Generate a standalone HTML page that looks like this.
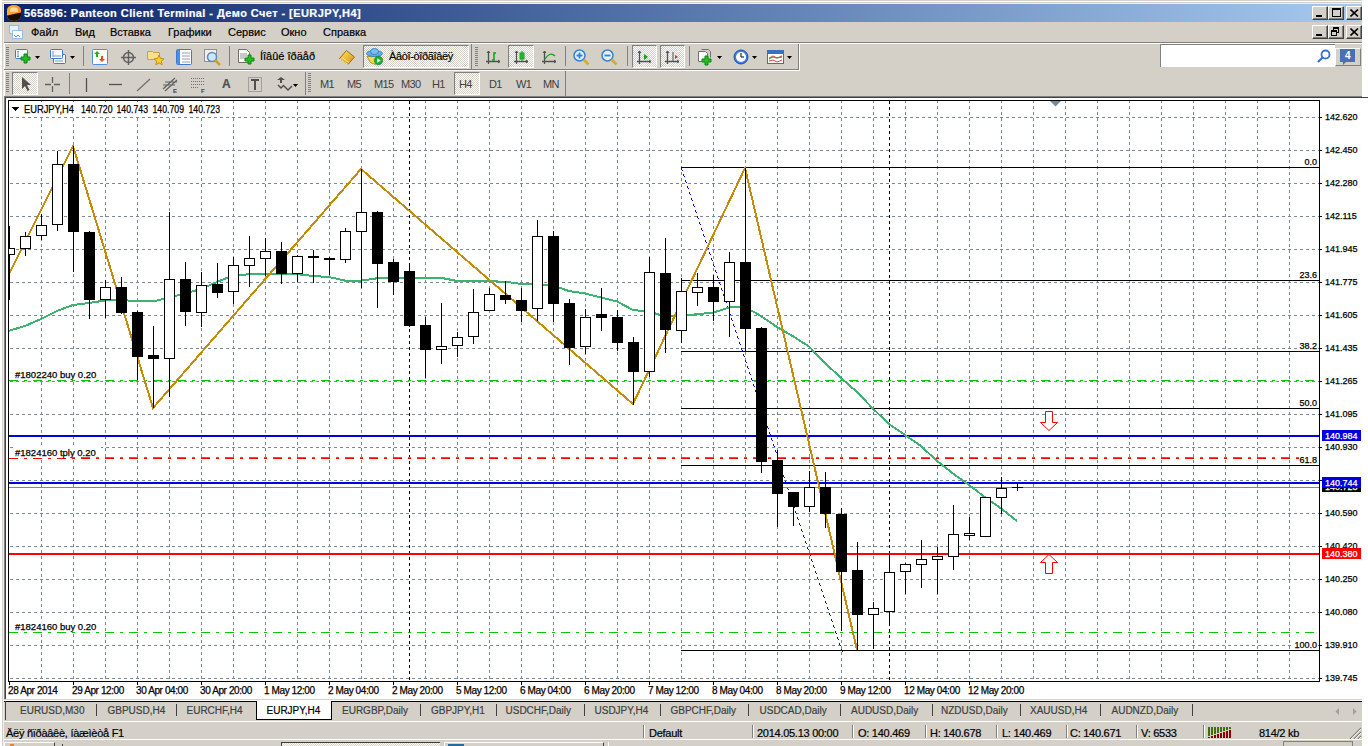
<!DOCTYPE html>
<html><head><meta charset="utf-8">
<style>
*{margin:0;padding:0;box-sizing:border-box}
html,body{width:1368px;height:746px;overflow:hidden;background:#fff;font-family:"Liberation Sans",sans-serif;}
.a{position:absolute}
.g{background:#d4d0c8}
.chart{position:absolute;left:0;top:0;}
.ct{font-family:"Liberation Sans",sans-serif;font-size:10px;fill:#000;stroke:#000;stroke-width:0.25px}
.fl{font-family:"Liberation Sans",sans-serif;font-size:9px;fill:#000;stroke:#000;stroke-width:0.25px}
.ol{font-family:"Liberation Sans",sans-serif;font-size:9.5px;fill:#000;stroke:#000;stroke-width:0.25px}
.tl{font-family:"Liberation Sans",sans-serif;font-size:10px;letter-spacing:-0.4px;fill:#000;stroke:#000;stroke-width:0.25px}
.ax{font-family:"Liberation Sans",sans-serif;font-size:9px;fill:#000;stroke:#000;stroke-width:0.25px}
.t{position:absolute;white-space:nowrap;font-size:11px;line-height:13px;color:#000;-webkit-text-stroke:0.2px}
.sep{position:absolute;width:1px;background:#808080}
.btn{position:absolute;background:#d4d0c8;border:1px solid;border-color:#fff #404040 #404040 #fff;box-shadow:inset -1px -1px 0 #808080}
.grip{position:absolute;width:3px;background:repeating-linear-gradient(#808080 0 1px,transparent 1px 2px)}
.press{position:absolute;border:1px solid;border-color:#808080 #fff #fff #808080;background-color:#e8e6e0;background-image:repeating-conic-gradient(#fff 0 25%,#d4d0c8 0 50%);background-size:2px 2px}
.tab{position:absolute;top:705px;font-size:10px;color:#404040;white-space:nowrap;-webkit-text-stroke:0.2px}
.tsep{position:absolute;top:704px;width:1px;height:12px;background:#404040}
.ssep{position:absolute;top:725px;width:2px;height:13px;border-left:1px solid #808080;border-right:1px solid #fff}
.st{position:absolute;top:727px;font-size:11px;color:#000;white-space:nowrap;letter-spacing:-0.27px;-webkit-text-stroke:0.2px}
</style></head><body>
<!-- window -->
<div class="a g" style="left:2px;top:0;width:1360px;height:1px"></div>
<div class="a g" style="left:2px;top:2px;width:1360px;height:744px"></div>
<div class="a" style="left:3px;top:3px;width:1359px;height:1px;background:#f0efea"></div>
<div class="a" style="left:3px;top:3px;width:1px;height:743px;background:#f0efea"></div>
<!-- title -->
<div class="a" style="left:4px;top:4px;width:1358px;height:18px;background:linear-gradient(90deg,#0a246a,#a6caf0)"></div>
<div class="a" style="left:7px;top:5px;width:14px;height:16px;border-radius:7px/5px;background:linear-gradient(100deg,#ffb030,#ff8a20);overflow:hidden">
  <div class="a" style="left:3px;top:2px;width:8px;height:5px;border-radius:4px 4px 0 0;background:#ffe6c0;opacity:.8"></div>
  <div class="a" style="left:-2px;top:9px;width:18px;height:9px;background:#1a0e04;transform:rotate(-12deg)"></div>
</div>
<div class="t" style="left:24px;top:7px;color:#fff;font-weight:bold;font-size:11px;letter-spacing:0.43px">565896: Panteon Client Terminal - Демо Счет - [EURJPY,H4]</div>
<div class="btn" style="left:1312px;top:6px;width:16px;height:14px"><div class="a" style="left:3px;top:8px;width:6px;height:2px;background:#000"></div></div>
<div class="btn" style="left:1328px;top:6px;width:16px;height:14px"><div class="a" style="left:3px;top:1px;width:9px;height:9px;border:1px solid #000;border-top-width:2px"></div></div>
<div class="btn" style="left:1346px;top:6px;width:16px;height:14px"><svg class="a" style="left:3px;top:2px" width="9" height="8"><path d="M0.5 0.5L8 7.5M8 0.5L0.5 7.5" stroke="#000" stroke-width="1.6"/></svg></div>
<!-- menu -->
<svg class="a" style="left:9px;top:25px" width="15" height="15"><rect x="0.5" y="0.5" width="9" height="8" fill="#eaf2ff" stroke="#4a8ee8" stroke-dasharray="1 1"/><rect x="3.5" y="5.5" width="10" height="8" fill="#fff" stroke="#4a8ee8" stroke-dasharray="1 1"/><path d="M5 10l2 2l2-2l2 2" stroke="#4a8ee8" fill="none"/></svg>
<div class="t" style="left:31px;top:26px">Файл</div>
<div class="t" style="left:75px;top:26px">Вид</div>
<div class="t" style="left:110px;top:26px">Вставка</div>
<div class="t" style="left:168px;top:26px">Графики</div>
<div class="t" style="left:228px;top:26px">Сервис</div>
<div class="t" style="left:281px;top:26px">Окно</div>
<div class="t" style="left:323px;top:26px">Справка</div>
<div class="btn" style="left:1312px;top:25px;width:16px;height:14px"><div class="a" style="left:3px;top:8px;width:6px;height:2px;background:#000"></div></div>
<div class="btn" style="left:1328px;top:25px;width:16px;height:14px"><svg class="a" style="left:2px;top:1px" width="10" height="10" shape-rendering="crispEdges"><path d="M2 0h6v2h-6zM2 2h1v1h-1zM7 2h1v4h-1zM6 5h2v1h-2z" fill="#000"/><path d="M0 3h6v2h-6zM0 5h1v4h-1zM5 5h1v4h-1zM0 8h6v1h-6z" fill="#000"/></svg></div>
<div class="btn" style="left:1346px;top:25px;width:16px;height:14px"><svg class="a" style="left:3px;top:2px" width="9" height="8"><path d="M0.5 0.5L8 7.5M8 0.5L0.5 7.5" stroke="#000" stroke-width="1.6"/></svg></div>
<div class="a" style="left:4px;top:42px;width:1358px;height:1px;background:#808080"></div>
<div class="a" style="left:4px;top:43px;width:1358px;height:1px;background:#fff"></div>
<!-- toolbars -->
<div class="a" style="left:4px;top:44px;width:795px;height:25px;border-left:1px solid #fff;border-right:1px solid #808080"></div><div class="grip" style="left:6px;top:47px;height:19px"></div><svg class="a" style="left:15px;top:49px" width="18" height="16"><rect x="0.5" y="0.5" width="12" height="9" rx="1" fill="#f4f8ff" stroke="#3a7ad0"/><path d="M3 2v6M2 3l1-1 1 1M2 7l1 1 1-1" stroke="#7a9ac0" fill="none"/><path d="M9 5h3v3h3v3h-3v3h-3v-3h-3v-3h3z" fill="#20c020" stroke="#108010"/></svg><svg class="a" style="left:35px;top:56px" width="6" height="4"><path d="M0 0h5l-2.5 3z" fill="#000"/></svg><svg class="a" style="left:50px;top:49px" width="18" height="16"><rect x="3.5" y="5.5" width="12" height="9" rx="1" fill="#f4f8ff" stroke="#3a7ad0"/><rect x="0.5" y="0.5" width="12" height="9" rx="1" fill="#f4f8ff" stroke="#3a7ad0"/><path d="M3 2v6M3 7h8M5 12h8" stroke="#7a9ac0" fill="none"/></svg><svg class="a" style="left:70px;top:56px" width="6" height="4"><path d="M0 0h5l-2.5 3z" fill="#000"/></svg><div class="sep" style="left:83px;top:46px;height:20px"></div><svg class="a" style="left:92px;top:49px" width="16" height="16"><rect x="0.5" y="0.5" width="15" height="15" rx="1" fill="#fff" stroke="#4a90e0"/><path d="M5 2l3 3h-2v3h-2v-3h-2z" fill="#20b020"/><path d="M10 13l3-3h-2v-3h-2v3h-2z" fill="#e05020"/></svg><svg class="a" style="left:121px;top:50px" width="16" height="16"><circle cx="7.5" cy="7.5" r="5" fill="none" stroke="#606060" stroke-width="1.5"/><path d="M7.5 0v15M0 7.5h15" stroke="#606060" stroke-width="1.5"/></svg><svg class="a" style="left:147px;top:49px" width="18" height="17"><path d="M0.5 2.5h5l1 1h6v7h-12z" fill="#f8e08a" stroke="#c8a040"/><path d="M12 6l1.5 3.5 3.5.3-2.7 2.4.9 3.6-3.2-2-3.2 2 .9-3.6-2.7-2.4 3.5-.3z" fill="#ffd020" stroke="#c09010"/></svg><svg class="a" style="left:176px;top:49px" width="16" height="16"><rect x="0.5" y="0.5" width="15" height="15" rx="1" fill="#fff" stroke="#3a7ad0"/><rect x="1" y="1" width="3" height="14" fill="#4a90e0"/><path d="M6 4h8M6 7h8M6 10h8M6 13h8" stroke="#8aa0c0"/></svg><svg class="a" style="left:204px;top:49px" width="19" height="17"><rect x="0.5" y="0.5" width="12" height="12" fill="#f0f0f0" stroke="#909090"/><circle cx="8" cy="8" r="4.5" fill="#cfe6ff" stroke="#5a8ac0" stroke-width="1.5"/><path d="M11 11l5 5" stroke="#d0a020" stroke-width="2.5"/></svg><div class="sep" style="left:229px;top:46px;height:20px"></div><svg class="a" style="left:238px;top:49px" width="18" height="17"><path d="M0.5 0.5h8l3 3v10h-11z" fill="#fff" stroke="#707070"/><path d="M2 5h7M2 7h7M2 9h5" stroke="#909090"/><path d="M10 6h3v3h3v3h-3v3h-3v-3h-3v-3h3z" fill="#20c020" stroke="#108010"/></svg><div class="t" style="left:260px;top:50px;color:#000;font-size:11px;">Íîâûé îðäåð</div><svg class="a" style="left:338px;top:49px" width="19" height="17"><defs><linearGradient id="bk" x1="0" y1="0" x2="1" y2="1"><stop offset="0" stop-color="#ffe860"/><stop offset="1" stop-color="#d09010"/></linearGradient></defs><path d="M1.5 9.5L8.5 1.5L16.5 8L10 15.5z" fill="url(#bk)" stroke="#a06a10"/><path d="M2 10l8 5.5M4 8.5l7 5" stroke="#f8e0a0" stroke-width="1"/></svg><div class="press" style="left:363px;top:45px;width:106px;height:23px"></div><svg class="a" style="left:366px;top:48px" width="18" height="17"><path d="M1 8.5l3.5 6 5 2 4-8z" fill="#f8d850" stroke="#c09020"/><ellipse cx="8.5" cy="5.5" rx="8" ry="3" fill="#60b0e8" stroke="#3a88c0"/><ellipse cx="8.5" cy="3.5" rx="4" ry="3" fill="#78c0f0" stroke="#3a88c0"/><circle cx="12.5" cy="12.5" r="4.2" fill="#18b030" stroke="#108020" stroke-width="0.6"/><path d="M11.2 10.2v4.6l3.6-2.3z" fill="#fff"/></svg><div class="t" style="left:389px;top:50px;color:#000;font-size:11px;letter-spacing:-0.35px">Àâòî-òîðãîâëÿ</div><div class="sep" style="left:471px;top:44px;height:25px"></div><div class="grip" style="left:475px;top:47px;height:19px"></div><svg class="a" style="left:486px;top:50px" width="15" height="16"><path d="M2.5 1v13M0 11.5h14" stroke="#505050" stroke-width="1.3"/><path d="M1 3l1.5-2 1.5 2M12 10l2 1.5-2 1.5" stroke="#505050" fill="none"/><path d="M6 10h2V3h2" stroke="#10a010" stroke-width="1.5" fill="none"/></svg><div class="press" style="left:508px;top:45px;width:26px;height:23px"></div><svg class="a" style="left:514px;top:50px" width="15" height="16"><path d="M2.5 1v13M0 11.5h14" stroke="#505050" stroke-width="1.3"/><path d="M1 3l1.5-2 1.5 2M12 10l2 1.5-2 1.5" stroke="#505050" fill="none"/><rect x="6" y="3" width="4" height="6" fill="#20d040" stroke="#10a010"/><path d="M8 1v10" stroke="#10a010"/></svg><svg class="a" style="left:542px;top:50px" width="15" height="16"><path d="M2.5 1v13M0 11.5h14" stroke="#505050" stroke-width="1.3"/><path d="M1 3l1.5-2 1.5 2M12 10l2 1.5-2 1.5" stroke="#505050" fill="none"/><path d="M3 9q5-8 10-3" stroke="#10a010" stroke-width="1.3" fill="none"/></svg><div class="sep" style="left:565px;top:46px;height:20px"></div><svg class="a" style="left:573px;top:49px" width="18" height="17"><circle cx="6.5" cy="6.5" r="5.5" fill="#e0f0ff" stroke="#3a80d0" stroke-width="1.5"/><path d="M6.5 3.5v6M3.5 6.5h6" stroke="#3a80d0" stroke-width="1.8"/><path d="M10.5 10.5l5 5" stroke="#d0b030" stroke-width="2.8"/></svg><svg class="a" style="left:601px;top:49px" width="18" height="17"><circle cx="6.5" cy="6.5" r="5.5" fill="#e0f0ff" stroke="#3a80d0" stroke-width="1.5"/><path d="M3.5 6.5h6" stroke="#3a80d0" stroke-width="1.8"/><path d="M10.5 10.5l5 5" stroke="#d0b030" stroke-width="2.8"/></svg><div class="sep" style="left:627px;top:46px;height:20px"></div><div class="press" style="left:632px;top:45px;width:25px;height:23px"></div><svg class="a" style="left:637px;top:50px" width="15" height="16"><path d="M2.5 1v13M0 11.5h14" stroke="#505050" stroke-width="1.3"/><path d="M1 3l1.5-2 1.5 2M12 10l2 1.5-2 1.5" stroke="#505050" fill="none"/><path d="M7 4l4 3-4 3z" fill="#10a010"/></svg><div class="press" style="left:660px;top:45px;width:25px;height:23px"></div><svg class="a" style="left:665px;top:50px" width="15" height="16"><path d="M2.5 1v13M0 11.5h14" stroke="#505050" stroke-width="1.3"/><path d="M1 3l1.5-2 1.5 2M12 10l2 1.5-2 1.5" stroke="#505050" fill="none"/><path d="M8 2v10" stroke="#505050"/><path d="M13 7l-3-2v4z" fill="#d03010"/></svg><div class="sep" style="left:689px;top:46px;height:20px"></div><svg class="a" style="left:698px;top:49px" width="18" height="17"><path d="M0.5 2.5h7l2 2v8h-9z" fill="#fff" stroke="#707070"/><path d="M3.5 0.5h7l2 2v6" fill="none" stroke="#707070"/><path d="M7 7h3v3h3v3h-3v3h-3v-3h-3v-3h3z" fill="#20c020" stroke="#108010"/></svg><svg class="a" style="left:717px;top:56px" width="6" height="4"><path d="M0 0h5l-2.5 3z" fill="#000"/></svg><svg class="a" style="left:733px;top:49px" width="17" height="17"><circle cx="8" cy="8" r="7" fill="#3a80e0" stroke="#1a50a0"/><circle cx="8" cy="8" r="5" fill="#fff"/><path d="M8 4v4h3" stroke="#000" fill="none"/></svg><svg class="a" style="left:752px;top:56px" width="6" height="4"><path d="M0 0h5l-2.5 3z" fill="#000"/></svg><svg class="a" style="left:767px;top:50px" width="18" height="15"><rect x="0.5" y="0.5" width="16" height="13" fill="#fff" stroke="#3a70c0"/><rect x="1" y="1" width="15" height="3" fill="#3a70c0"/><path d="M2 8l4-2 4 2 5-2M2 11l4-1 4 2 5-2" stroke="#e04040" fill="none"/><path d="M2 9l4-2 4 1 5-1" stroke="#20a020" fill="none"/></svg><svg class="a" style="left:787px;top:56px" width="6" height="4"><path d="M0 0h5l-2.5 3z" fill="#000"/></svg><div class="a" style="left:1160px;top:44px;width:175px;height:23px;background:#fff;border-top:1px solid #808080;border-left:1px solid #808080"></div><svg class="a" style="left:1317px;top:49px" width="14" height="14"><circle cx="8.5" cy="5.5" r="4" fill="none" stroke="#3a70d0" stroke-width="1.8"/><path d="M6 8l-5 5" stroke="#3a70d0" stroke-width="2.2"/></svg><div class="a" style="left:1335px;top:48px;width:26px;height:18px;border-top:1px solid #fff;border-left:1px solid #fff;border-right:1px solid #808080;border-bottom:1px solid #808080"></div><svg class="a" style="left:1340px;top:48px" width="16" height="17"><rect x="0" y="1" width="15" height="13" fill="#4a70b0"/><path d="M3 14v3l3-3z" fill="#4a70b0"/><text x="5" y="11" font-size="10" font-weight="bold" fill="#fff" font-family="Liberation Sans">4</text></svg><div class="a" style="left:4px;top:71px;width:562px;height:25px;border-left:1px solid #fff;border-right:1px solid #808080"></div><div class="grip" style="left:6px;top:73px;height:20px"></div><div class="press" style="left:12px;top:72px;width:26px;height:23px"></div><svg class="a" style="left:19px;top:76px" width="14" height="16"><path d="M3 1v12l3-3 2.5 5 2-1-2.5-5h4z" fill="#505050"/></svg><svg class="a" style="left:45px;top:77px" width="16" height="16"><path d="M7.5 0v6M7.5 9v6M0 7.5h6M9 7.5h6" stroke="#606060" stroke-width="1.3"/></svg><div class="sep" style="left:69px;top:73px;height:21px"></div><svg class="a" style="left:85px;top:78px" width="3" height="14"><path d="M1.5 0v14" stroke="#505050" stroke-width="1.3"/></svg><svg class="a" style="left:109px;top:83px" width="13" height="3"><path d="M0 1.5h13" stroke="#505050" stroke-width="1.3"/></svg><svg class="a" style="left:136px;top:78px" width="15" height="14"><path d="M1 13L14 1" stroke="#707070" stroke-width="1.3"/></svg><svg class="a" style="left:162px;top:76px" width="17" height="18"><path d="M1 13L13 2M3 15L15 4M1 9h12M3 6h12" stroke="#606060" stroke-width="1.2"/><text x="11" y="17" font-size="6" font-weight="bold" fill="#404040" font-family="Liberation Sans">E</text></svg><svg class="a" style="left:191px;top:77px" width="17" height="17"><path d="M0 1.5h13M0 4.5h13M0 7.5h13M0 10.5h8" stroke="#707070" stroke-dasharray="1 1"/><text x="10" y="16" font-size="6" font-weight="bold" fill="#404040" font-family="Liberation Sans">F</text></svg><div class="t" style="left:222px;top:78px;color:#505050;font-size:12px;"><b>A</b></div><svg class="a" style="left:248px;top:77px" width="14" height="15"><rect x="0.5" y="0.5" width="13" height="14" fill="none" stroke="#707070" stroke-dasharray="1 1"/><path d="M3 3h8M7 3v10" stroke="#505050" stroke-width="2"/></svg><svg class="a" style="left:276px;top:77px" width="23" height="15"><path d="M1 3l4-3 4 3-3 0v3h-2v-3z" fill="#505050"/><path d="M2 8l3 3 3-3M8 9l4 4 4-4" stroke="#505050" stroke-width="1.5" fill="none"/><path d="M17 7h5l-2.5 3z" fill="#000"/></svg><div class="sep" style="left:305px;top:72px;height:23px"></div><div class="grip" style="left:308px;top:73px;height:20px"></div><div class="t" style="left:320px;top:78px;color:#404040;font-size:11px;letter-spacing:-0.6px;-webkit-text-stroke:0">M1</div><div class="t" style="left:347px;top:78px;color:#404040;font-size:11px;letter-spacing:-0.6px;-webkit-text-stroke:0">M5</div><div class="t" style="left:374px;top:78px;color:#404040;font-size:11px;letter-spacing:-0.6px;-webkit-text-stroke:0">M15</div><div class="t" style="left:401px;top:78px;color:#404040;font-size:11px;letter-spacing:-0.6px;-webkit-text-stroke:0">M30</div><div class="t" style="left:432px;top:78px;color:#404040;font-size:11px;letter-spacing:-0.6px;-webkit-text-stroke:0">H1</div><div class="press" style="left:454px;top:72px;width:26px;height:23px"></div><div class="t" style="left:459px;top:78px;color:#404040;font-size:11px;letter-spacing:-0.6px;-webkit-text-stroke:0">H4</div><div class="t" style="left:489px;top:78px;color:#404040;font-size:11px;letter-spacing:-0.6px;-webkit-text-stroke:0">D1</div><div class="t" style="left:516px;top:78px;color:#404040;font-size:11px;letter-spacing:-0.6px;-webkit-text-stroke:0">W1</div><div class="t" style="left:543px;top:78px;color:#404040;font-size:11px;letter-spacing:-0.6px;-webkit-text-stroke:0">MN</div>
<div class="a" style="left:4px;top:69px;width:795px;height:1px;background:#808080"></div>
<div class="a" style="left:4px;top:70px;width:796px;height:1px;background:#fff"></div>
<div class="a" style="left:799px;top:44px;width:1px;height:26px;background:#fff"></div>
<div class="a" style="left:4px;top:96px;width:1358px;height:1px;background:#808080"></div>
<div class="a" style="left:4px;top:97px;width:1364px;height:1px;background:#404040"></div>
<div class="a" style="left:4px;top:96px;width:1px;height:603px;background:#808080"></div>
<div class="a" style="left:5px;top:97px;width:1px;height:602px;background:#404040"></div>
<svg class="chart" width="1368" height="746" viewBox="0 0 1368 746" shape-rendering="crispEdges"><defs><clipPath id="cc"><rect x="9" y="101" width="1310" height="580"/></clipPath></defs><rect x="6" y="98" width="1362" height="601" fill="#fff"/><g clip-path="url(#cc)"><line x1="10" y1="117.5" x2="1319" y2="117.5" stroke="#778899" stroke-dasharray="3 3"/><line x1="10" y1="150.5" x2="1319" y2="150.5" stroke="#778899" stroke-dasharray="3 3"/><line x1="10" y1="183.5" x2="1319" y2="183.5" stroke="#778899" stroke-dasharray="3 3"/><line x1="10" y1="216.5" x2="1319" y2="216.5" stroke="#778899" stroke-dasharray="3 3"/><line x1="10" y1="249.5" x2="1319" y2="249.5" stroke="#778899" stroke-dasharray="3 3"/><line x1="10" y1="282.5" x2="1319" y2="282.5" stroke="#778899" stroke-dasharray="3 3"/><line x1="10" y1="315.5" x2="1319" y2="315.5" stroke="#778899" stroke-dasharray="3 3"/><line x1="10" y1="348.5" x2="1319" y2="348.5" stroke="#778899" stroke-dasharray="3 3"/><line x1="10" y1="381.5" x2="1319" y2="381.5" stroke="#778899" stroke-dasharray="3 3"/><line x1="10" y1="414.5" x2="1319" y2="414.5" stroke="#778899" stroke-dasharray="3 3"/><line x1="10" y1="447.5" x2="1319" y2="447.5" stroke="#778899" stroke-dasharray="3 3"/><line x1="10" y1="480.5" x2="1319" y2="480.5" stroke="#778899" stroke-dasharray="3 3"/><line x1="10" y1="513.5" x2="1319" y2="513.5" stroke="#778899" stroke-dasharray="3 3"/><line x1="10" y1="546.5" x2="1319" y2="546.5" stroke="#778899" stroke-dasharray="3 3"/><line x1="10" y1="579.5" x2="1319" y2="579.5" stroke="#778899" stroke-dasharray="3 3"/><line x1="10" y1="612.5" x2="1319" y2="612.5" stroke="#778899" stroke-dasharray="3 3"/><line x1="10" y1="645.5" x2="1319" y2="645.5" stroke="#778899" stroke-dasharray="3 3"/><line x1="10" y1="678.5" x2="1319" y2="678.5" stroke="#778899" stroke-dasharray="3 3"/><line x1="41.5" y1="100" x2="41.5" y2="681" stroke="#778899" stroke-dasharray="3 3"/><line x1="73.5" y1="100" x2="73.5" y2="681" stroke="#778899" stroke-dasharray="3 3"/><line x1="105.5" y1="100" x2="105.5" y2="681" stroke="#778899" stroke-dasharray="3 3"/><line x1="137.5" y1="100" x2="137.5" y2="681" stroke="#778899" stroke-dasharray="3 3"/><line x1="169.5" y1="100" x2="169.5" y2="681" stroke="#778899" stroke-dasharray="3 3"/><line x1="201.5" y1="100" x2="201.5" y2="681" stroke="#778899" stroke-dasharray="3 3"/><line x1="233.5" y1="100" x2="233.5" y2="681" stroke="#778899" stroke-dasharray="3 3"/><line x1="265.5" y1="100" x2="265.5" y2="681" stroke="#778899" stroke-dasharray="3 3"/><line x1="297.5" y1="100" x2="297.5" y2="681" stroke="#778899" stroke-dasharray="3 3"/><line x1="329.5" y1="100" x2="329.5" y2="681" stroke="#778899" stroke-dasharray="3 3"/><line x1="361.5" y1="100" x2="361.5" y2="681" stroke="#778899" stroke-dasharray="3 3"/><line x1="393.5" y1="100" x2="393.5" y2="681" stroke="#778899" stroke-dasharray="3 3"/><line x1="425.5" y1="100" x2="425.5" y2="681" stroke="#778899" stroke-dasharray="3 3"/><line x1="457.5" y1="100" x2="457.5" y2="681" stroke="#778899" stroke-dasharray="3 3"/><line x1="489.5" y1="100" x2="489.5" y2="681" stroke="#778899" stroke-dasharray="3 3"/><line x1="521.5" y1="100" x2="521.5" y2="681" stroke="#778899" stroke-dasharray="3 3"/><line x1="553.5" y1="100" x2="553.5" y2="681" stroke="#778899" stroke-dasharray="3 3"/><line x1="585.5" y1="100" x2="585.5" y2="681" stroke="#778899" stroke-dasharray="3 3"/><line x1="617.5" y1="100" x2="617.5" y2="681" stroke="#778899" stroke-dasharray="3 3"/><line x1="649.5" y1="100" x2="649.5" y2="681" stroke="#778899" stroke-dasharray="3 3"/><line x1="681.5" y1="100" x2="681.5" y2="681" stroke="#778899" stroke-dasharray="3 3"/><line x1="713.5" y1="100" x2="713.5" y2="681" stroke="#778899" stroke-dasharray="3 3"/><line x1="745.5" y1="100" x2="745.5" y2="681" stroke="#778899" stroke-dasharray="3 3"/><line x1="777.5" y1="100" x2="777.5" y2="681" stroke="#778899" stroke-dasharray="3 3"/><line x1="809.5" y1="100" x2="809.5" y2="681" stroke="#778899" stroke-dasharray="3 3"/><line x1="841.5" y1="100" x2="841.5" y2="681" stroke="#778899" stroke-dasharray="3 3"/><line x1="873.5" y1="100" x2="873.5" y2="681" stroke="#778899" stroke-dasharray="3 3"/><line x1="905.5" y1="100" x2="905.5" y2="681" stroke="#778899" stroke-dasharray="3 3"/><line x1="937.5" y1="100" x2="937.5" y2="681" stroke="#778899" stroke-dasharray="3 3"/><line x1="969.5" y1="100" x2="969.5" y2="681" stroke="#778899" stroke-dasharray="3 3"/><line x1="1001.5" y1="100" x2="1001.5" y2="681" stroke="#778899" stroke-dasharray="3 3"/><line x1="1033.5" y1="100" x2="1033.5" y2="681" stroke="#778899" stroke-dasharray="3 3"/><line x1="1065.5" y1="100" x2="1065.5" y2="681" stroke="#778899" stroke-dasharray="3 3"/><line x1="1097.5" y1="100" x2="1097.5" y2="681" stroke="#778899" stroke-dasharray="3 3"/><line x1="1129.5" y1="100" x2="1129.5" y2="681" stroke="#778899" stroke-dasharray="3 3"/><line x1="1161.5" y1="100" x2="1161.5" y2="681" stroke="#778899" stroke-dasharray="3 3"/><line x1="1193.5" y1="100" x2="1193.5" y2="681" stroke="#778899" stroke-dasharray="3 3"/><line x1="1225.5" y1="100" x2="1225.5" y2="681" stroke="#778899" stroke-dasharray="3 3"/><line x1="1257.5" y1="100" x2="1257.5" y2="681" stroke="#778899" stroke-dasharray="3 3"/><line x1="1289.5" y1="100" x2="1289.5" y2="681" stroke="#778899" stroke-dasharray="3 3"/><line x1="409.5" y1="101" x2="409.5" y2="681" stroke="#000" stroke-dasharray="3 3"/><line x1="889.5" y1="101" x2="889.5" y2="681" stroke="#000" stroke-dasharray="3 3"/><rect x="9" y="102" width="213" height="13" fill="#fff"/><path d="M12 107 L19 107 L15.5 111 Z" fill="#000"/><text x="24" y="112.5" class="ct" textLength="50" lengthAdjust="spacingAndGlyphs">EURJPY,H4</text><text x="81" y="112.5" class="ct" textLength="31.5" lengthAdjust="spacingAndGlyphs">140.720</text><text x="116.5" y="112.5" class="ct" textLength="31.5" lengthAdjust="spacingAndGlyphs">140.743</text><text x="152.5" y="112.5" class="ct" textLength="31.5" lengthAdjust="spacingAndGlyphs">140.709</text><text x="188.5" y="112.5" class="ct" textLength="31.5" lengthAdjust="spacingAndGlyphs">140.723</text><path d="M1050 101 L1061 101 L1055.5 106.5 Z" fill="#778899" shape-rendering="auto"/><line x1="681" y1="167.5" x2="1319" y2="167.5" stroke="#000"/><line x1="681" y1="280.5" x2="1319" y2="280.5" stroke="#000"/><line x1="681" y1="351.5" x2="1319" y2="351.5" stroke="#000"/><line x1="681" y1="408.5" x2="1319" y2="408.5" stroke="#000"/><line x1="681" y1="465.5" x2="1319" y2="465.5" stroke="#000"/><line x1="681" y1="650.5" x2="1319" y2="650.5" stroke="#000"/><path d="M681 168h1v2h-1zM682 170h1v1h-1zM683 174h1v2h-1zM684 176h1v1h-1zM685 180h1v2h-1zM686 182h1v1h-1zM687 186h1v2h-1zM688 188h1v1h-1zM689 192h1v2h-1zM690 194h1v1h-1zM691 198h1v2h-1zM692 200h1v1h-1zM693 204h1v2h-1zM694 206h1v1h-1zM695 210h1v2h-1zM696 212h1v1h-1zM697 216h1v2h-1zM698 218h1v1h-1zM699 222h1v2h-1zM700 224h1v1h-1zM701 228h1v2h-1zM702 230h1v1h-1zM703 234h1v2h-1zM704 236h1v1h-1zM705 240h1v2h-1zM706 242h1v1h-1zM707 246h1v2h-1zM708 248h1v1h-1zM709 252h1v2h-1zM710 254h1v1h-1zM711 258h1v2h-1zM712 260h1v1h-1zM713 264h1v2h-1zM714 266h1v1h-1zM715 270h1v2h-1zM716 272h1v1h-1zM717 276h1v2h-1zM718 278h1v1h-1zM719 282h1v2h-1zM720 284h1v1h-1zM721 288h1v2h-1zM722 290h1v1h-1zM723 294h1v2h-1zM724 296h1v1h-1zM725 300h1v2h-1zM726 302h1v1h-1zM727 306h1v2h-1zM728 308h1v1h-1zM729 312h1v2h-1zM730 314h1v1h-1zM731 318h1v2h-1zM732 320h1v1h-1zM733 324h1v2h-1zM734 326h1v1h-1zM735 330h1v2h-1zM736 332h1v1h-1zM737 336h1v2h-1zM738 338h1v1h-1zM739 342h1v2h-1zM740 344h1v1h-1zM741 348h1v2h-1zM742 350h1v1h-1zM743 354h1v2h-1zM744 356h1v1h-1zM745 360h1v2h-1zM746 362h1v1h-1zM747 366h1v2h-1zM748 368h1v1h-1zM749 372h1v2h-1zM750 374h1v1h-1zM751 378h1v2h-1zM752 380h1v1h-1zM753 384h1v2h-1zM754 386h1v1h-1zM755 390h1v2h-1zM756 392h1v1h-1zM757 396h1v2h-1zM758 398h1v1h-1zM759 402h1v2h-1zM760 404h1v1h-1zM761 408h1v2h-1zM762 410h1v1h-1zM763 414h1v2h-1zM764 416h1v1h-1zM765 420h1v2h-1zM766 422h1v1h-1zM767 426h1v2h-1zM768 428h1v1h-1zM769 432h1v2h-1zM770 434h1v1h-1zM771 438h1v2h-1zM772 440h1v1h-1zM773 444h1v2h-1zM774 446h1v1h-1zM775 450h1v2h-1zM776 452h1v1h-1zM777 456h1v2h-1zM778 458h1v1h-1zM779 462h1v2h-1zM780 464h1v1h-1zM781 469h1v2h-1zM782 471h1v1h-1zM783 475h1v2h-1zM784 477h1v1h-1zM785 481h1v2h-1zM786 483h1v1h-1zM787 487h1v2h-1zM788 489h1v1h-1zM789 493h1v2h-1zM790 495h1v1h-1zM791 499h1v2h-1zM792 501h1v1h-1zM793 505h1v2h-1zM794 507h1v1h-1zM795 511h1v2h-1zM796 513h1v1h-1zM797 517h1v2h-1zM798 519h1v1h-1zM799 523h1v2h-1zM800 525h1v1h-1zM801 529h1v2h-1zM802 531h1v1h-1zM803 535h1v2h-1zM804 537h1v1h-1zM805 541h1v2h-1zM806 543h1v1h-1zM807 547h1v2h-1zM808 549h1v1h-1zM809 553h1v2h-1zM810 555h1v1h-1zM811 559h1v2h-1zM812 561h1v1h-1zM813 565h1v2h-1zM814 567h1v1h-1zM815 571h1v2h-1zM816 573h1v1h-1zM817 577h1v2h-1zM818 579h1v1h-1zM819 583h1v2h-1zM820 585h1v1h-1zM821 589h1v2h-1zM822 591h1v1h-1zM823 595h1v2h-1zM824 597h1v1h-1zM825 601h1v2h-1zM826 603h1v1h-1zM827 607h1v2h-1zM828 609h1v1h-1zM829 613h1v2h-1zM830 615h1v1h-1zM831 619h1v2h-1zM832 621h1v1h-1zM833 625h1v2h-1zM834 627h1v1h-1zM835 631h1v2h-1zM836 633h1v1h-1zM837 637h1v2h-1zM838 639h1v1h-1zM839 643h1v2h-1zM840 645h1v1h-1zM841 649h1v2h-1zM842 651h1v1h-1z" fill="#0000ff"/><line x1="9" y1="380.5" x2="1319" y2="380.5" stroke="#00c800" stroke-dasharray="9 6 3 6"/><line x1="9" y1="632.5" x2="1319" y2="632.5" stroke="#00c800" stroke-dasharray="9 6 3 6"/><line x1="72" y1="457.5" x2="1319" y2="457.5" stroke="#00c800" stroke-dasharray="9 6 3 6" stroke-dashoffset="15"/><line x1="9" y1="458.5" x2="1319" y2="458.5" stroke="#ff0000" stroke-dasharray="9 6 3 6"/><rect x="9" y="435" width="1310" height="2" fill="#0000dd"/><rect x="9" y="482" width="1310" height="2" fill="#0000dd"/><line x1="9" y1="487.5" x2="1319" y2="487.5" stroke="#778899"/><rect x="9" y="553" width="1310" height="2" fill="#ff0000"/><rect x="13" y="369" width="86" height="10" fill="#fff"/><text x="15" y="377.5" class="ol">#1802240 buy 0.20</text><rect x="13" y="447" width="88" height="10" fill="#fff"/><text x="15" y="455.5" class="ol">#1824160 tply 0.20</text><rect x="13" y="621" width="86" height="10" fill="#fff"/><text x="15" y="629.5" class="ol">#1824160 buy 0.20</text><polyline points="9,330.8 25,326 41,319 57,311 73,305 89,303 105,300.5 121,300 137,301.2 153,301.5 169,297.5 185,293.5 201,289 217,282 233,275.5 249,274.3 265,274 281,274 297,274.2 313,276 329,277 345,280.6 361,280.6 377,278.3 393,277.8 409,278 425,277.8 441,277.8 457,281 473,281 489,281.4 505,281.6 521,284 537,284.2 553,285.5 569,291 585,293.4 601,297.5 617,301.5 633,310 649,311.5 665,316.5 681,316 697,314.2 713,312.7 729,307.5 745,307 761,316 777,327 793,336.3 809,346.5 825,363 841,378 857,392 873,408.7 889,424 905,435 921,446 937,461 953,473.5 969,485 985,497.2 1001,508.4 1017,521" fill="none" stroke="#3cb371" stroke-width="2"/><polyline points="9,274 73,146 153,408 361,169 633,404 745,168 857,650" fill="none" stroke="#c48c08" stroke-width="2" stroke-linejoin="miter"/><line x1="9.5" y1="226" x2="9.5" y2="300" stroke="#000"/><rect x="4.5" y="248.5" width="10" height="6" fill="#fff" stroke="#000"/><line x1="25.5" y1="232" x2="25.5" y2="256" stroke="#000"/><rect x="20.5" y="236.5" width="10" height="12" fill="#fff" stroke="#000"/><line x1="41.5" y1="214" x2="41.5" y2="240" stroke="#000"/><rect x="36.5" y="225.5" width="10" height="10" fill="#fff" stroke="#000"/><line x1="57.5" y1="151" x2="57.5" y2="231" stroke="#000"/><rect x="52.5" y="164.5" width="10" height="60" fill="#fff" stroke="#000"/><line x1="73.5" y1="146" x2="73.5" y2="272" stroke="#000"/><rect x="68" y="164" width="11" height="68" fill="#000"/><line x1="89.5" y1="231" x2="89.5" y2="319" stroke="#000"/><rect x="84" y="232" width="11" height="68" fill="#000"/><line x1="105.5" y1="280" x2="105.5" y2="318" stroke="#000"/><rect x="100.5" y="287.5" width="10" height="12" fill="#fff" stroke="#000"/><line x1="121.5" y1="277" x2="121.5" y2="314" stroke="#000"/><rect x="116" y="287" width="11" height="26" fill="#000"/><line x1="137.5" y1="311" x2="137.5" y2="380" stroke="#000"/><rect x="132" y="312" width="11" height="45" fill="#000"/><line x1="153.5" y1="326" x2="153.5" y2="408" stroke="#000"/><rect x="148" y="355" width="11" height="4" fill="#000"/><line x1="169.5" y1="212" x2="169.5" y2="397" stroke="#000"/><rect x="164.5" y="279.5" width="10" height="79" fill="#fff" stroke="#000"/><line x1="185.5" y1="262" x2="185.5" y2="326" stroke="#000"/><rect x="180" y="279" width="11" height="33" fill="#000"/><line x1="201.5" y1="272" x2="201.5" y2="327" stroke="#000"/><rect x="196.5" y="285.5" width="10" height="27" fill="#fff" stroke="#000"/><line x1="217.5" y1="263" x2="217.5" y2="298" stroke="#000"/><rect x="212" y="284" width="11" height="9" fill="#000"/><line x1="233.5" y1="257" x2="233.5" y2="304" stroke="#000"/><rect x="228.5" y="265.5" width="10" height="26" fill="#fff" stroke="#000"/><line x1="249.5" y1="236" x2="249.5" y2="287" stroke="#000"/><rect x="244.5" y="258.5" width="10" height="7" fill="#fff" stroke="#000"/><line x1="265.5" y1="238" x2="265.5" y2="276" stroke="#000"/><rect x="260.5" y="251.5" width="10" height="7" fill="#fff" stroke="#000"/><line x1="281.5" y1="242" x2="281.5" y2="284" stroke="#000"/><rect x="276" y="251" width="11" height="23" fill="#000"/><line x1="297.5" y1="255" x2="297.5" y2="282" stroke="#000"/><rect x="292.5" y="256.5" width="10" height="17" fill="#fff" stroke="#000"/><line x1="313.5" y1="250" x2="313.5" y2="283" stroke="#000"/><rect x="308" y="256" width="11" height="2" fill="#000"/><line x1="329.5" y1="257" x2="329.5" y2="275" stroke="#000"/><rect x="324" y="258" width="11" height="2" fill="#000"/><line x1="345.5" y1="228" x2="345.5" y2="263" stroke="#000"/><rect x="340.5" y="231.5" width="10" height="28" fill="#fff" stroke="#000"/><line x1="361.5" y1="169" x2="361.5" y2="288" stroke="#000"/><rect x="356.5" y="212.5" width="10" height="19" fill="#fff" stroke="#000"/><line x1="377.5" y1="211" x2="377.5" y2="308" stroke="#000"/><rect x="372" y="212" width="11" height="52" fill="#000"/><line x1="393.5" y1="259" x2="393.5" y2="295" stroke="#000"/><rect x="388" y="262" width="11" height="20" fill="#000"/><line x1="409.5" y1="266" x2="409.5" y2="327" stroke="#000"/><rect x="404" y="271" width="11" height="55" fill="#000"/><line x1="425.5" y1="317" x2="425.5" y2="378" stroke="#000"/><rect x="420" y="325" width="11" height="25" fill="#000"/><line x1="441.5" y1="303" x2="441.5" y2="364" stroke="#000"/><rect x="436.5" y="346.5" width="10" height="3" fill="#fff" stroke="#000"/><line x1="457.5" y1="332" x2="457.5" y2="357" stroke="#000"/><rect x="452.5" y="337.5" width="10" height="8" fill="#fff" stroke="#000"/><line x1="473.5" y1="289" x2="473.5" y2="344" stroke="#000"/><rect x="468.5" y="312.5" width="10" height="24" fill="#fff" stroke="#000"/><line x1="489.5" y1="288" x2="489.5" y2="311" stroke="#000"/><rect x="484.5" y="294.5" width="10" height="16" fill="#fff" stroke="#000"/><line x1="505.5" y1="281" x2="505.5" y2="304" stroke="#000"/><rect x="500" y="295" width="11" height="5" fill="#000"/><line x1="521.5" y1="288" x2="521.5" y2="322" stroke="#000"/><rect x="516" y="300" width="11" height="11" fill="#000"/><line x1="537.5" y1="220" x2="537.5" y2="321" stroke="#000"/><rect x="532.5" y="236.5" width="10" height="72" fill="#fff" stroke="#000"/><line x1="553.5" y1="231" x2="553.5" y2="322" stroke="#000"/><rect x="548" y="236" width="11" height="68" fill="#000"/><line x1="569.5" y1="299" x2="569.5" y2="365" stroke="#000"/><rect x="564" y="303" width="11" height="45" fill="#000"/><line x1="585.5" y1="309" x2="585.5" y2="354" stroke="#000"/><rect x="580.5" y="317.5" width="10" height="29" fill="#fff" stroke="#000"/><line x1="601.5" y1="288" x2="601.5" y2="331" stroke="#000"/><rect x="596" y="314" width="11" height="4" fill="#000"/><line x1="617.5" y1="310" x2="617.5" y2="351" stroke="#000"/><rect x="612" y="317" width="11" height="26" fill="#000"/><line x1="633.5" y1="337" x2="633.5" y2="405" stroke="#000"/><rect x="628" y="342" width="11" height="30" fill="#000"/><line x1="649.5" y1="257" x2="649.5" y2="377" stroke="#000"/><rect x="644.5" y="272.5" width="10" height="99" fill="#fff" stroke="#000"/><line x1="665.5" y1="238" x2="665.5" y2="353" stroke="#000"/><rect x="660" y="273" width="11" height="57" fill="#000"/><line x1="681.5" y1="278" x2="681.5" y2="343" stroke="#000"/><rect x="676.5" y="291.5" width="10" height="39" fill="#fff" stroke="#000"/><line x1="697.5" y1="273" x2="697.5" y2="306" stroke="#000"/><rect x="692.5" y="287.5" width="10" height="5" fill="#fff" stroke="#000"/><line x1="713.5" y1="275" x2="713.5" y2="321" stroke="#000"/><rect x="708" y="287" width="11" height="15" fill="#000"/><line x1="729.5" y1="252" x2="729.5" y2="337" stroke="#000"/><rect x="724.5" y="262.5" width="10" height="39" fill="#fff" stroke="#000"/><line x1="745.5" y1="168" x2="745.5" y2="351" stroke="#000"/><rect x="740" y="262" width="11" height="67" fill="#000"/><line x1="761.5" y1="327" x2="761.5" y2="473" stroke="#000"/><rect x="756" y="328" width="11" height="134" fill="#000"/><line x1="777.5" y1="450" x2="777.5" y2="527" stroke="#000"/><rect x="772" y="460" width="11" height="34" fill="#000"/><line x1="793.5" y1="492" x2="793.5" y2="526" stroke="#000"/><rect x="788" y="492" width="11" height="15" fill="#000"/><line x1="809.5" y1="471" x2="809.5" y2="512" stroke="#000"/><rect x="804.5" y="487.5" width="10" height="19" fill="#fff" stroke="#000"/><line x1="825.5" y1="472" x2="825.5" y2="528" stroke="#000"/><rect x="820" y="487" width="11" height="27" fill="#000"/><line x1="841.5" y1="508" x2="841.5" y2="631" stroke="#000"/><rect x="836" y="514" width="11" height="58" fill="#000"/><line x1="857.5" y1="542" x2="857.5" y2="650" stroke="#000"/><rect x="852" y="570" width="11" height="45" fill="#000"/><line x1="873.5" y1="602" x2="873.5" y2="649" stroke="#000"/><rect x="868.5" y="608.5" width="10" height="6" fill="#fff" stroke="#000"/><line x1="889.5" y1="554" x2="889.5" y2="624" stroke="#000"/><rect x="884.5" y="572.5" width="10" height="39" fill="#fff" stroke="#000"/><line x1="905.5" y1="563" x2="905.5" y2="594" stroke="#000"/><rect x="900.5" y="564.5" width="10" height="7" fill="#fff" stroke="#000"/><line x1="921.5" y1="540" x2="921.5" y2="588" stroke="#000"/><rect x="916.5" y="559.5" width="10" height="5" fill="#fff" stroke="#000"/><line x1="937.5" y1="547" x2="937.5" y2="594" stroke="#000"/><rect x="932.5" y="556.5" width="10" height="3" fill="#fff" stroke="#000"/><line x1="953.5" y1="505" x2="953.5" y2="570" stroke="#000"/><rect x="948.5" y="534.5" width="10" height="22" fill="#fff" stroke="#000"/><line x1="969.5" y1="517" x2="969.5" y2="540" stroke="#000"/><rect x="964.5" y="533.5" width="10" height="2" fill="#fff" stroke="#000"/><line x1="985.5" y1="497" x2="985.5" y2="537" stroke="#000"/><rect x="980.5" y="497.5" width="10" height="39" fill="#fff" stroke="#000"/><line x1="1001.5" y1="477" x2="1001.5" y2="514" stroke="#000"/><rect x="996.5" y="488.5" width="10" height="9" fill="#fff" stroke="#000"/><line x1="1012" y1="487.5" x2="1023" y2="487.5" stroke="#000"/><line x1="1017.5" y1="484" x2="1017.5" y2="491" stroke="#000"/><rect x="1303.5" y="158" width="14.5" height="8" fill="#fff"/><text x="1317" y="165" class="fl" text-anchor="end">0.0</text><rect x="1298.5" y="271" width="19.5" height="8" fill="#fff"/><text x="1317" y="278" class="fl" text-anchor="end">23.6</text><rect x="1298.5" y="342" width="19.5" height="8" fill="#fff"/><text x="1317" y="349" class="fl" text-anchor="end">38.2</text><rect x="1298.5" y="399" width="19.5" height="8" fill="#fff"/><text x="1317" y="406" class="fl" text-anchor="end">50.0</text><rect x="1298.5" y="456" width="19.5" height="8" fill="#fff"/><text x="1317" y="463" class="fl" text-anchor="end">61.8</text><rect x="1293.5" y="641" width="24.5" height="8" fill="#fff"/><text x="1317" y="648" class="fl" text-anchor="end">100.0</text><path d="M1045.5 411.5 L1052.5 411.5 L1052.5 422.5 L1057.5 422.5 L1049 430.5 L1040.5 422.5 L1045.5 422.5 Z" fill="#fff" stroke="#ff0000" shape-rendering="auto"/><path d="M1045.5 573.5 L1052.5 573.5 L1052.5 562.5 L1057.5 562.5 L1049 554.5 L1040.5 562.5 L1045.5 562.5 Z" fill="#fff" stroke="#ff0000" shape-rendering="auto"/></g><rect x="1320" y="98" width="48" height="601" fill="#fff"/><rect x="6" y="682" width="1362" height="17" fill="#fff"/><rect x="8.5" y="100.5" width="1311" height="581" fill="none" stroke="#000"/><line x1="1320" y1="117.5" x2="1322" y2="117.5" stroke="#000"/><text x="1325" y="120" class="ax">142.620</text><line x1="1320" y1="150.5" x2="1322" y2="150.5" stroke="#000"/><text x="1325" y="153" class="ax">142.450</text><line x1="1320" y1="183.5" x2="1322" y2="183.5" stroke="#000"/><text x="1325" y="186" class="ax">142.280</text><line x1="1320" y1="216.5" x2="1322" y2="216.5" stroke="#000"/><text x="1325" y="219" class="ax">142.115</text><line x1="1320" y1="249.5" x2="1322" y2="249.5" stroke="#000"/><text x="1325" y="252" class="ax">141.945</text><line x1="1320" y1="282.5" x2="1322" y2="282.5" stroke="#000"/><text x="1325" y="285" class="ax">141.775</text><line x1="1320" y1="315.5" x2="1322" y2="315.5" stroke="#000"/><text x="1325" y="318" class="ax">141.605</text><line x1="1320" y1="348.5" x2="1322" y2="348.5" stroke="#000"/><text x="1325" y="351" class="ax">141.435</text><line x1="1320" y1="381.5" x2="1322" y2="381.5" stroke="#000"/><text x="1325" y="384" class="ax">141.265</text><line x1="1320" y1="414.5" x2="1322" y2="414.5" stroke="#000"/><text x="1325" y="417" class="ax">141.095</text><line x1="1320" y1="447.5" x2="1322" y2="447.5" stroke="#000"/><text x="1325" y="450" class="ax">140.930</text><line x1="1320" y1="480.5" x2="1322" y2="480.5" stroke="#000"/><text x="1325" y="483" class="ax">140.760</text><line x1="1320" y1="513.5" x2="1322" y2="513.5" stroke="#000"/><text x="1325" y="516" class="ax">140.590</text><line x1="1320" y1="546.5" x2="1322" y2="546.5" stroke="#000"/><text x="1325" y="549" class="ax">140.420</text><line x1="1320" y1="579.5" x2="1322" y2="579.5" stroke="#000"/><text x="1325" y="582" class="ax">140.250</text><line x1="1320" y1="612.5" x2="1322" y2="612.5" stroke="#000"/><text x="1325" y="615" class="ax">140.080</text><line x1="1320" y1="645.5" x2="1322" y2="645.5" stroke="#000"/><text x="1325" y="648" class="ax">139.910</text><line x1="1320" y1="678.5" x2="1322" y2="678.5" stroke="#000"/><text x="1325" y="681" class="ax">139.745</text><rect x="1322" y="481" width="39" height="11" fill="#000"/><text x="1325" y="490" class="ax" style="fill:#fff;stroke:#fff">140.723</text><rect x="1322" y="477" width="39" height="11" fill="#0000dd"/><text x="1325" y="486" class="ax" style="fill:#fff;stroke:#fff">140.744</text><rect x="1322" y="430" width="39" height="11" fill="#0000dd"/><text x="1325" y="439" class="ax" style="fill:#fff;stroke:#fff">140.984</text><rect x="1322" y="548" width="39" height="11" fill="#ff0000"/><text x="1325" y="557" class="ax" style="fill:#fff;stroke:#fff">140.380</text><line x1="9.5" y1="682" x2="9.5" y2="685" stroke="#000"/><text x="8" y="694" class="tl">28 Apr 2014</text><line x1="73.5" y1="682" x2="73.5" y2="685" stroke="#000"/><text x="72" y="694" class="tl">29 Apr 12:00</text><line x1="137.5" y1="682" x2="137.5" y2="685" stroke="#000"/><text x="136" y="694" class="tl">30 Apr 04:00</text><line x1="201.5" y1="682" x2="201.5" y2="685" stroke="#000"/><text x="200" y="694" class="tl">30 Apr 20:00</text><line x1="265.5" y1="682" x2="265.5" y2="685" stroke="#000"/><text x="264" y="694" class="tl">1 May 12:00</text><line x1="329.5" y1="682" x2="329.5" y2="685" stroke="#000"/><text x="328" y="694" class="tl">2 May 04:00</text><line x1="393.5" y1="682" x2="393.5" y2="685" stroke="#000"/><text x="392" y="694" class="tl">2 May 20:00</text><line x1="457.5" y1="682" x2="457.5" y2="685" stroke="#000"/><text x="456" y="694" class="tl">5 May 12:00</text><line x1="521.5" y1="682" x2="521.5" y2="685" stroke="#000"/><text x="520" y="694" class="tl">6 May 04:00</text><line x1="585.5" y1="682" x2="585.5" y2="685" stroke="#000"/><text x="584" y="694" class="tl">6 May 20:00</text><line x1="649.5" y1="682" x2="649.5" y2="685" stroke="#000"/><text x="648" y="694" class="tl">7 May 12:00</text><line x1="713.5" y1="682" x2="713.5" y2="685" stroke="#000"/><text x="712" y="694" class="tl">8 May 04:00</text><line x1="777.5" y1="682" x2="777.5" y2="685" stroke="#000"/><text x="776" y="694" class="tl">8 May 20:00</text><line x1="841.5" y1="682" x2="841.5" y2="685" stroke="#000"/><text x="840" y="694" class="tl">9 May 12:00</text><line x1="905.5" y1="682" x2="905.5" y2="685" stroke="#000"/><text x="904" y="694" class="tl">12 May 04:00</text><line x1="969.5" y1="682" x2="969.5" y2="685" stroke="#000"/><text x="968" y="694" class="tl">12 May 20:00</text></svg>
<!-- tabs -->
<div class="a" style="left:4px;top:699px;width:1358px;height:1px;background:#d4d0c8"></div>
<div class="a" style="left:4px;top:700px;width:1358px;height:1px;background:#fff"></div>
<div class="a" style="left:4px;top:701px;width:1358px;height:1px;background:#000"></div>
<div class="a" style="left:5px;top:701px;width:1px;height:19px;background:#404040"></div>
<div class="a" style="left:4px;top:721px;width:1358px;height:1px;background:#fff"></div>
<div class="a" style="left:256px;top:701px;width:76px;height:19px;background:#fff;border:1px solid #000;border-top:none"></div><div class="tab" style="left:20px;color:#404040">EURUSD,M30</div><div class="tsep" style="left:96px"></div><div class="tab" style="left:107.5px;color:#404040">GBPUSD,H4</div><div class="tsep" style="left:176px"></div><div class="tab" style="left:186.5px;color:#404040">EURCHF,H4</div><div class="tab" style="left:266.5px;color:#000">EURJPY,H4</div><div class="tab" style="left:342px;color:#404040">EURGBP,Daily</div><div class="tsep" style="left:420px"></div><div class="tab" style="left:431px;color:#404040">GBPJPY,H1</div><div class="tsep" style="left:496px"></div><div class="tab" style="left:505.5px;color:#404040">USDCHF,Daily</div><div class="tsep" style="left:584px"></div><div class="tab" style="left:594.5px;color:#404040">USDJPY,H4</div><div class="tsep" style="left:660px"></div><div class="tab" style="left:670.5px;color:#404040">GBPCHF,Daily</div><div class="tsep" style="left:748px"></div><div class="tab" style="left:759.5px;color:#404040">USDCAD,Daily</div><div class="tsep" style="left:840px"></div><div class="tab" style="left:851px;color:#404040">AUDUSD,Daily</div><div class="tsep" style="left:932px"></div><div class="tab" style="left:941px;color:#404040">NZDUSD,Daily</div><div class="tsep" style="left:1020px"></div><div class="tab" style="left:1030px;color:#404040">XAUUSD,H4</div><div class="tsep" style="left:1100px"></div><div class="tab" style="left:1111.5px;color:#404040">AUDNZD,Daily</div><div class="tsep" style="left:1192px"></div><svg class="a" style="left:1335px;top:708px" width="24" height="7"><path d="M4 0v7L0.5 3.5z" fill="#a0a0a0"/><path d="M18 0v7l3.5-3.5z" fill="#a0a0a0"/></svg>
<!-- status -->
<div class="st" style="left:6px">Äëÿ ñïðàâêè, íàæìèòå F1</div><div class="ssep" style="left:643px"></div><div class="ssep" style="left:752px"></div><div class="ssep" style="left:852px"></div><div class="ssep" style="left:925px"></div><div class="ssep" style="left:996px"></div><div class="ssep" style="left:1066px"></div><div class="ssep" style="left:1136px"></div><div class="ssep" style="left:1203px"></div><div class="st" style="left:649px">Default</div><div class="st" style="left:757px">2014.05.13 00:00</div><div class="st" style="left:858px">O: 140.469</div><div class="st" style="left:930px">H: 140.678</div><div class="st" style="left:1002px">L: 140.469</div><div class="st" style="left:1070px">C: 140.671</div><div class="st" style="left:1141px">V: 6533</div><div class="st" style="left:1259px">814/2 kb</div><svg class="a" style="left:1208px;top:727px" width="24" height="11"><rect x="0" y="0" width="2" height="9" fill="#3f6f00"/><rect x="0" y="10" width="2" height="1" fill="#900000"/><rect x="3" y="0" width="2" height="8" fill="#3f6f00"/><rect x="3" y="9" width="2" height="2" fill="#900000"/><rect x="6" y="0" width="2" height="7" fill="#3f6f00"/><rect x="6" y="8" width="2" height="3" fill="#900000"/><rect x="9" y="0" width="2" height="6" fill="#3f6f00"/><rect x="9" y="7" width="2" height="4" fill="#900000"/><rect x="12" y="0" width="2" height="5" fill="#3f6f00"/><rect x="12" y="6" width="2" height="5" fill="#900000"/><rect x="15" y="0" width="2" height="4" fill="#3f6f00"/><rect x="15" y="5" width="2" height="6" fill="#900000"/><rect x="18" y="0" width="2" height="3" fill="#3f6f00"/><rect x="18" y="4" width="2" height="7" fill="#900000"/><rect x="21" y="0" width="2" height="2" fill="#3f6f00"/><rect x="21" y="3" width="2" height="8" fill="#900000"/></svg><svg class="a" style="left:1349px;top:727px" width="13" height="12"><path d="M12 1L1 12M12 5L5 12M12 9L9 12" stroke="#808080" stroke-width="1.2"/><path d="M12 2L2 12M12 6L6 12M12 10L10 12" stroke="#fff" stroke-width="0.8"/></svg><div class="a" style="left:4px;top:742px;width:51px;height:4px;background:#d4d0c8;border-top:1px solid #fff;border-left:1px solid #fff;border-right:1px solid #404040"></div><div class="a" style="left:10px;top:744px;width:4px;height:2px;background:#f08020"></div><div class="a" style="left:62px;top:744px;width:1px;height:2px;background:#404040"></div><div class="a" style="left:281px;top:742px;width:159px;height:4px;border-top:1px solid #404040;border-left:1px solid #404040;background-image:repeating-conic-gradient(#fff 0 25%,#d4d0c8 0 50%);background-size:2px 2px"></div><div class="a" style="left:444px;top:742px;width:160px;height:4px;border-top:1px solid #fff;border-left:1px solid #fff;border-right:1px solid #404040"></div><div class="a" style="left:448px;top:744px;width:16px;height:2px;background:#2a6a9a"></div><div class="a" style="left:608px;top:742px;width:1px;height:4px;background:#fff"></div><div class="a" style="left:1283px;top:741px;width:70px;height:5px;border:1px solid #808080;border-bottom:none"></div>
<div class="a" style="left:4px;top:739px;width:1358px;height:1px;background:#fff"></div>
</body></html>
